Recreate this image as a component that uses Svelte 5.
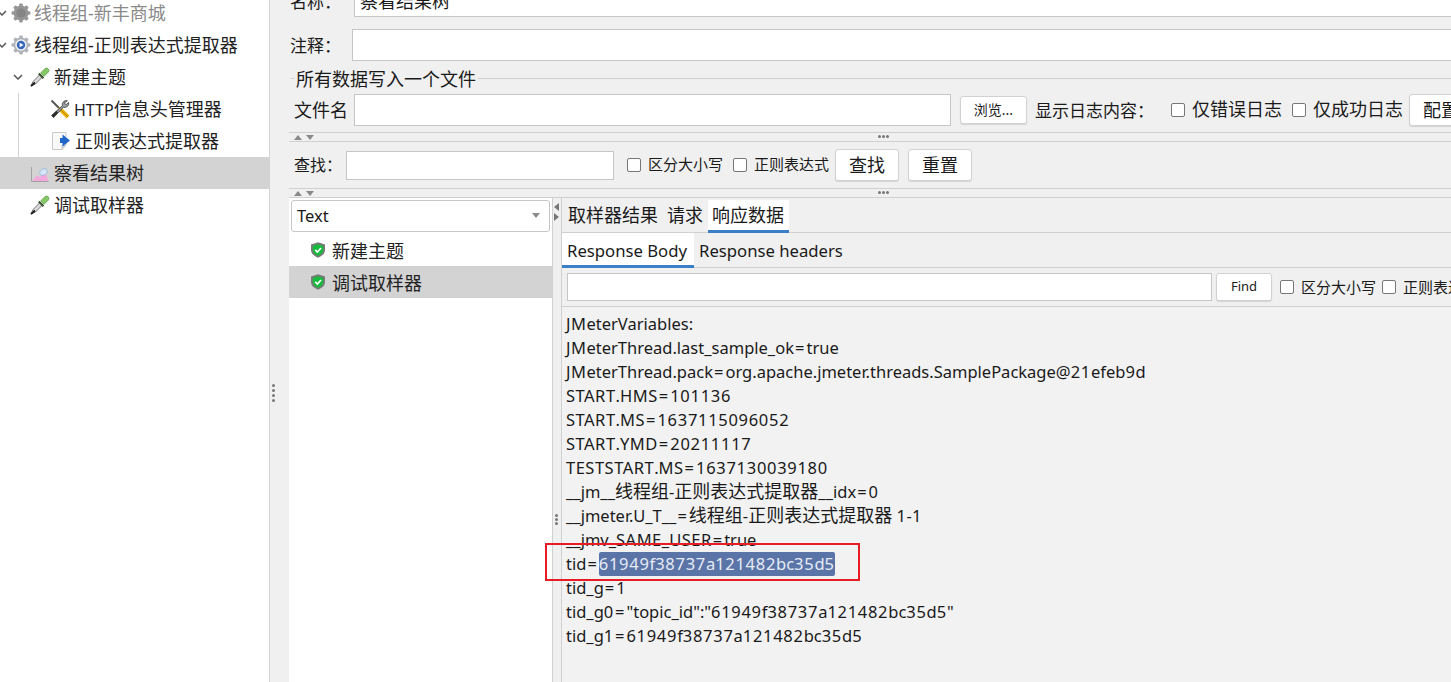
<script>
	const tree = [
		{ label: '线程组-新丰商城', icon: 'gearOff', indent: 34, chevron: -3, muted: true },
		{ label: '线程组-正则表达式提取器', icon: 'gear', indent: 34, chevron: -3 },
		{ label: '新建主题', icon: 'dropper', indent: 54, chevron: 13 },
		{ label: 'HTTP信息头管理器', icon: 'tools', indent: 74, guide: true },
		{ label: '正则表达式提取器', icon: 'doc', indent: 75, guide: true },
		{ label: '察看结果树', icon: 'graph', indent: 54, selected: true },
		{ label: '调试取样器', icon: 'dropper', indent: 54 }
	];

	const samples = [
		{ label: '新建主题' },
		{ label: '调试取样器', selected: true }
	];

	const vars = [
		'JMeterVariables:',
		'JMeterThread.last_sample_ok=true',
		'JMeterThread.pack=org.apache.jmeter.threads.SamplePackage@21efeb9d',
		'START.HMS=101136',
		'START.MS=1637115096052',
		'START.YMD=20211117',
		'TESTSTART.MS=1637130039180',
		'__jm__线程组-正则表达式提取器__idx=0',
		'__jmeter.U_T__=线程组-正则表达式提取器 1-1',
		'__jmv_SAME_USER=true'
	];

	const after = [
		'tid_g=1',
		'tid_g0="topic_id":"61949f38737a121482bc35d5"',
		'tid_g1=61949f38737a121482bc35d5'
	];

	// the original font has wider CJK, caps, digits and = than Noto Sans, so runs get their own class
	function runs(text) {
		return text.split(/([\u4e00-\u9fff]+|[A-Z]{2,}|\d+|=)/).filter(Boolean).map((t) => ({
			t,
			c: /[\u4e00-\u9fff]/.test(t) ? 'cjk' : /\d/.test(t) ? 'num' : t === '=' ? 'eq' : /^[A-Z]{2,}$/.test(t) ? 'caps' : ''
		}));
	}
</script>

{#snippet styled(text)}
	{#each runs(text) as r}<span class={r.c}>{r.t}</span>{/each}
{/snippet}

{#snippet gear(off)}
	<svg class="ico" viewBox="0 0 20 20" width="20" height="20">
		<g fill={off ? '#969696' : '#aeb3ba'}>
			<circle cx="10" cy="10" r="7.4" />
			<rect x="8.2" y="0.6" width="3.6" height="18.8" rx="1" />
			<rect x="8.2" y="0.6" width="3.6" height="18.8" rx="1" transform="rotate(45 10 10)" />
			<rect x="8.2" y="0.6" width="3.6" height="18.8" rx="1" transform="rotate(90 10 10)" />
			<rect x="8.2" y="0.6" width="3.6" height="18.8" rx="1" transform="rotate(135 10 10)" />
		</g>
		{#if off}
			<circle cx="10" cy="10" r="4.6" fill="#858585" />
		{:else}
			<circle cx="10" cy="10" r="5.8" fill="#eef1f5" />
			<circle cx="10" cy="10" r="4.2" fill="#3566b8" />
			<path d="M8.6 7.8 12.6 10 8.6 12.2Z" fill="#fff" />
		{/if}
	</svg>
{/snippet}

{#snippet dropper()}
	<svg class="ico" viewBox="0 0 20 20" width="20" height="20">
		<path d="M1 19 3 14.500 10 7.500 12.500 10 5.500 17Z" fill="#d9d9d9" stroke="#6a6a6a" stroke-width=".9" />
		<path d="M1 19 5 15.500" stroke="#1e1e1e" stroke-width="1.800" />
		<path d="M8.800 6.500 13.500 11.200" stroke="#39562e" stroke-width="2.200" />
		<path d="M10.800 5.800 14.800 1.800a2.300 2.300 0 0 1 3.400 3.400L14.200 9.200Z" fill="#86c766" stroke="#5d9a45" stroke-width=".7" />
	</svg>
{/snippet}

{#snippet tools()}
	<svg class="ico" viewBox="0 0 20 20" width="20" height="20">
		<path d="M1.500 1.500 9 9" stroke="#555" stroke-width="2" />
		<path d="M9 9 18 18" stroke="#eeb211" stroke-width="4" />
		<path d="M9 9 18 18" stroke="#8a6500" stroke-width=".6" />
		<path d="M17.400 1.800a4 4 0 0 0-5 5L1.600 16.400l2 2.200L13.400 8.200a4 4 0 0 0 5.200-4.800l-2.400 2.200-2-1.600Z" fill="#9a9da2" stroke="#3a3a3a" stroke-width=".8" />
		<path d="M1.600 16.400 6.500 11.800 8 13.400 3.600 18.600Z" fill="#2e2e2e" />
	</svg>
{/snippet}

{#snippet doc()}
	<svg class="ico" viewBox="0 0 20 20" width="20" height="20">
		<path d="M1.500 1.500H15V14L11 18.500H1.500Z" fill="#f9f9f9" stroke="#c9c9c9" />
		<path d="M11 18.500V14H15Z" fill="#dcdcdc" stroke="#bbb" stroke-width=".6" />
		<path d="M11.500 3.500 19 9.500 11.500 15.500V12H9V7H11.500Z" fill="#1f66c8" />
	</svg>
{/snippet}

{#snippet graph()}
	<svg class="ico" viewBox="0 0 20 20" width="20" height="20">
		<path d="M1.500 4V18.500H18.500" fill="none" stroke="#a3a3a3" />
		<path d="M2 18 7 12.500 10 14 15 9 18.500 18Z" fill="#f3a9dc" />
		<ellipse cx="13.500" cy="9" rx="4" ry="3" fill="#d6e7f8" stroke="#8fb3d9" stroke-width=".7" transform="rotate(-25 13.500 9)" />
	</svg>
{/snippet}

{#snippet shield()}
	<svg class="ico" viewBox="0 0 16 16" width="16" height="16">
		<path d="M8 .3 15 2.500V8c0 3.700-3.100 6.100-7 7.700C4.100 14.100 1 11.700 1 8V2.500Z" fill="#777a77" />
		<path d="M8 2.300 13.200 3.900V8c0 2.700-2.300 4.500-5.200 5.700C5.100 12.500 2.800 10.700 2.800 8V3.900Z" fill="#14bb3c" />
		<path d="M5.200 7.800 7.400 10 11 6" fill="none" stroke="#fff" stroke-width="1.700" />
	</svg>
{/snippet}

{#snippet check(label)}
	<span class="check"><i></i><span class="t">{label}</span></span>
{/snippet}

{#snippet split()}
	<div class="split">
		<span class="tri up"></span><span class="tri down"></span>
		<span class="grip-h"><b></b><b></b><b></b></span>
	</div>
{/snippet}

<div class="app">
	<aside class="tree">
		{#each tree as node}
			<div class="node" class:selected={node.selected} class:muted={node.muted} style="padding-left:{node.indent}px">
				{#if node.chevron !== undefined}
					<svg class="chev" style="left:{node.chevron}px" viewBox="0 0 10 6" width="10" height="6"><path d="M1 1 5 5 9 1" fill="none" stroke="#555" stroke-width="1.500" /></svg>
				{/if}
				{#if node.guide}<span class="guide"></span>{/if}
				<span class="node-ico">
					{#if node.icon === 'gear'}{@render gear(false)}
					{:else if node.icon === 'gearOff'}{@render gear(true)}
					{:else if node.icon === 'dropper'}{@render dropper()}
					{:else if node.icon === 'tools'}{@render tools()}
					{:else if node.icon === 'doc'}{@render doc()}
					{:else}{@render graph()}{/if}
				</span>
				<span>{@render styled(node.label)}</span>
			</div>
		{/each}
	</aside>

	<div class="sash"><b></b><b></b><b></b><b></b></div>

	<main class="pane">
		<div class="row name">
			<label for="n">名称：</label>
			<input id="n" value="察看结果树" />
		</div>
		<div class="row comment">
			<label for="c">注释：</label>
			<input id="c" />
		</div>
		<div class="legend"><span>所有数据写入一个文件</span></div>
		<div class="row file">
			<label for="f">文件名</label>
			<input id="f" />
			<button class="small browse">浏览...</button>
			<span class="log-label">显示日志内容：</span>
			{@render check('仅错误日志')}
			{@render check('仅成功日志')}
			<button class="config">配置</button>
		</div>
		{@render split()}
		<div class="row search">
			<label for="s">查找：</label>
			<input id="s" />
			<span class="sm-check">{@render check('区分大小写')}</span>
			<span class="sm-check">{@render check('正则表达式')}</span>
			<button>查找</button>
			<button>重置</button>
		</div>
		{@render split()}

		<section class="results">
			<div class="list">
				<div class="combo">Text<span class="tri down"></span></div>
				{#each samples as s}
					<div class="sample" class:selected={s.selected}>
						{@render shield()}<span>{s.label}</span>
					</div>
				{/each}
			</div>
			<div class="divider">
				<span class="tri left"></span><span class="tri right"></span>
				<span class="grip-v"><b></b><b></b><b></b></span>
			</div>
			<div class="detail">
				<div class="tabs">
					<span>取样器结果</span><span>请求</span><span class="active">响应数据</span>
				</div>
				<div class="subtabs">
					<span class="active">Response Body</span><span>Response headers</span>
				</div>
				<div class="find">
					<input />
					<button class="small">Find</button>
					<span class="sm-check">{@render check('区分大小写')}</span>
					<span class="sm-check">{@render check('正则表达式')}</span>
				</div>
				<div class="output">
					{#each vars as line}<div>{@render styled(line)}</div>{/each}
					<div class="hit"><span>tid</span><span class="eq">=</span><mark>{@render styled('61949f38737a121482bc35d5')}</mark><span class="redbox"></span></div>
					{#each after as line}<div>{@render styled(line)}</div>{/each}
				</div>
			</div>
		</section>
	</main>
</div>

<style>
	:global(body) {
		margin: 0;
		background: #f0f0f0;
	}

	.app {
		display: flex;
		width: 1451px;
		height: 682px;
		overflow: hidden;
		font-family: "Noto Sans", "Noto Sans CJK SC", sans-serif;
		font-size: 16px;
		color: #1a1a1a;
	}

	.tree {
		flex: none;
		width: 270px;
		box-sizing: border-box;
		margin-top: -3px;
		background: #fff;
		border-right: 1px solid #d4d4d4;
		color: #222;
	}

	.node {
		position: relative;
		display: flex;
		align-items: center;
		box-sizing: border-box;
		height: 32px;
		padding-bottom: 2px;
		font-size: 16px;
		white-space: nowrap;
	}

	.node:nth-child(-n + 2) {
		font-size: 18px;
	}

	.node .cjk {
		font-size: 18px;
	}

	.node.selected {
		background: #d3d3d3;
	}

	.node.muted {
		color: #8a8a8a;
	}

	.node-ico {
		position: absolute;
		display: flex;
		margin-left: -24px;
		top: 6px;
	}

	.node:nth-child(-n + 2) .node-ico {
		margin-left: -23px;
	}

	.chev {
		position: absolute;
		top: 13px;
	}

	.guide {
		position: absolute;
		left: 18px;
		top: 0;
		bottom: 0;
		border-left: 1px solid #d4d4d4;
	}

	.sash {
		flex: none;
		width: 19px;
		display: flex;
		flex-direction: column;
		gap: 2px;
		padding: 384px 0 0 2px;
		box-sizing: border-box;
	}

	.sash b,
	.grip-v b,
	.grip-h b {
		display: block;
		width: 3px;
		height: 3px;
		border-radius: 50%;
		background: #777;
	}

	.pane {
		flex: 1;
		min-width: 0;
		display: flex;
		flex-direction: column;
		margin-top: -15px;
	}

	.row {
		flex: none;
		display: flex;
		align-items: center;
		height: 32px;
		white-space: nowrap;
	}

	input {
		box-sizing: border-box;
		height: 32px;
		border: 1px solid #c6c6c6;
		background: #fff;
		font: inherit;
		color: inherit;
		padding: 0 5px 2px;
		min-width: 0;
		outline: none;
	}

	label {
		flex: none;
		box-sizing: border-box;
		padding-bottom: 2px;
		font-size: 17px;
	}

	.name input,
	.comment input {
		flex: 1;
		margin-right: -4px;
		font-size: 18px;
	}

	.name label {
		width: 65px;
		padding-left: 1px;
	}

	.comment {
		margin-top: 12px;
	}

	.comment label {
		width: 63px;
		padding-left: 1px;
	}

	.legend {
		flex: none;
		display: flex;
		align-items: center;
		height: 20px;
		margin: 7px 0 6px 2px;
		font-size: 18px;
		white-space: nowrap;
	}

	.legend span {
		padding-bottom: 1px;
	}

	.legend::before {
		content: "";
		width: 3px;
		border-top: 1px solid #d0d0d0;
		margin-right: 2px;
	}

	.legend::after {
		content: "";
		flex: 1;
		border-top: 1px solid #d0d0d0;
		margin-left: 2px;
	}

	.file label {
		width: 65px;
		padding-left: 5px;
		font-size: 18px;
	}

	.file input {
		flex: none;
		width: 597px;
	}

	button {
		flex: none;
		box-sizing: border-box;
		height: 32px;
		width: 64px;
		padding: 0 0 2px;
		background: #fff;
		border: 1px solid #d2d2d2;
		border-radius: 3px;
		box-shadow: 0 1px 1px rgba(0, 0, 0, 0.12);
		font: inherit;
		font-size: 18px;
		color: inherit;
	}

	button.small {
		height: 28px;
		font-size: 13px;
	}

	button.browse {
		width: 67px;
		margin-left: 9px;
		font-size: 14px;
	}

	.log-label {
		flex: none;
		box-sizing: border-box;
		width: 136px;
		margin-left: 8px;
		padding-bottom: 2px;
		font-size: 17px;
	}

	.check {
		display: inline-flex;
		align-items: center;
		flex: none;
	}

	.check i {
		flex: none;
		box-sizing: border-box;
		width: 14px;
		height: 14px;
		margin-right: 7px;
		border: 1px solid #777;
		border-radius: 2px;
		background: #fff;
	}

	.check .t {
		padding-bottom: 4px;
	}

	.file .check {
		font-size: 18px;
		margin-right: 10px;
	}

	.file .check + .check {
		margin-right: 6px;
	}

	.split {
		position: relative;
		flex: none;
		box-sizing: border-box;
		height: 10px;
		margin-top: 6px;
		display: flex;
		align-items: center;
		gap: 4px;
		padding-left: 5px;
		border-top: 1px solid #d0d0d0;
		border-bottom: 1px solid #d0d0d0;
	}

	.grip-h {
		position: absolute;
		left: 589px;
		top: 2px;
		display: flex;
		gap: 1px;
	}

	.tri {
		display: block;
		width: 0;
		height: 0;
		border: 4px solid transparent;
	}

	.tri.up {
		border-top: 0;
		border-bottom: 5px solid #8a8a8a;
	}

	.tri.down {
		border-bottom: 0;
		border-top: 5px solid #8a8a8a;
	}

	.tri.left {
		border-left: 0;
		border-right: 5px solid #777;
	}

	.tri.right {
		border-right: 0;
		border-left: 5px solid #777;
	}

	.search {
		height: 46px;
	}

	.search + .split {
		margin-top: 0;
	}

	.search label {
		width: 57px;
		padding-left: 5px;
		padding-bottom: 3px;
		font-size: 16px;
	}

	.search input {
		flex: none;
		width: 268px;
		height: 29px;
	}

	.search button {
		margin-right: 9px;
	}

	.sm-check {
		display: inline-flex;
		flex: none;
		font-size: 15px;
	}

	.search .sm-check:first-of-type {
		margin-left: 13px;
		margin-right: 10px;
	}

	.search .sm-check + .sm-check {
		margin-right: 6px;
	}

	.results {
		flex: 1;
		min-height: 0;
		display: flex;
	}

	.list {
		flex: none;
		width: 263px;
		background: #fff;
	}

	.combo {
		box-sizing: border-box;
		display: flex;
		align-items: center;
		justify-content: space-between;
		height: 32px;
		margin: 2px;
		padding: 0 9px 2px 5px;
		border: 1px solid #c6c6c6;
		border-radius: 3px;
		font-size: 16.500px;
	}

	.sample {
		display: flex;
		align-items: center;
		box-sizing: border-box;
		gap: 6px;
		height: 32px;
		padding-left: 21px;
		font-size: 18px;
		color: #222;
	}

	.sample span {
		padding-bottom: 1px;
	}

	.sample.selected {
		background: #d3d3d3;
	}

	.divider {
		flex: none;
		box-sizing: border-box;
		width: 10px;
		position: relative;
		border-left: 1px solid #d0d0d0;
		border-right: 1px solid #d0d0d0;
		padding: 5px 0 0 1px;
		display: flex;
		flex-direction: column;
		gap: 2px;
	}

	.grip-v {
		position: absolute;
		left: 2px;
		top: 316px;
		display: flex;
		flex-direction: column;
		gap: 1px;
	}

	.detail {
		flex: 1;
		min-width: 0;
		display: flex;
		flex-direction: column;
		background: #f2f2f2;
	}

	.tabs {
		flex: none;
		display: flex;
		height: 35px;
		box-sizing: border-box;
		padding: 2px 0 0 1.500px;
		border-bottom: 1px solid #d0d0d0;
		font-size: 18px;
		background: #f0f0f0;
	}

	.tabs span {
		box-sizing: border-box;
		padding: 0 4.500px;
		line-height: 30px;
	}

	.tabs .active {
		background: #fff;
		border-bottom: 3px solid #3a7fc8;
		height: 33px;
	}

	.subtabs {
		flex: none;
		display: flex;
		height: 35px;
		box-sizing: border-box;
		border-bottom: 1px solid #d0d0d0;
		font-size: 16.700px;
		background: #f0f0f0;
	}

	.subtabs span {
		box-sizing: border-box;
		padding: 0 5px;
		line-height: 35px;
	}

	.subtabs .active {
		width: 132px;
		background: #fff;
		border-bottom: 3px solid #3a7fc8;
		height: 35px;
	}

	.find {
		flex: none;
		display: flex;
		align-items: center;
		height: 39px;
		box-sizing: border-box;
		padding-left: 5px;
		border-bottom: 1px solid #d0d0d0;
		white-space: nowrap;
		background: #f0f0f0;
	}

	.find input {
		flex: none;
		width: 645px;
		height: 28px;
	}

	.find button {
		width: 56px;
		margin: 0 8px 0 4px;
	}

	.find .sm-check {
		margin-right: 6px;
	}

	.find .check .t {
		padding-bottom: 2px;
	}

	.output {
		padding: 5px 0 0 4px;
		font-size: 16.500px;
		line-height: 24px;
		white-space: nowrap;
	}

	.output .cjk {
		font-size: 18px;
		line-height: 1;
	}

	.output .caps {
		letter-spacing: 0.500px;
	}

	.output .num {
		letter-spacing: 0.700px;
	}

	.output .eq {
		letter-spacing: 2px;
		margin-left: 1px;
	}

	.hit {
		position: relative;
	}

	mark {
		display: inline-block;
		background: #5a74a8;
		color: #e6ebf5;
		border-radius: 2px;
		padding: 0;
	}

	.redbox {
		position: absolute;
		left: -21px;
		top: -9px;
		width: 315px;
		height: 38px;
		box-sizing: border-box;
		border: 2px solid #e81c24;
	}
</style>
